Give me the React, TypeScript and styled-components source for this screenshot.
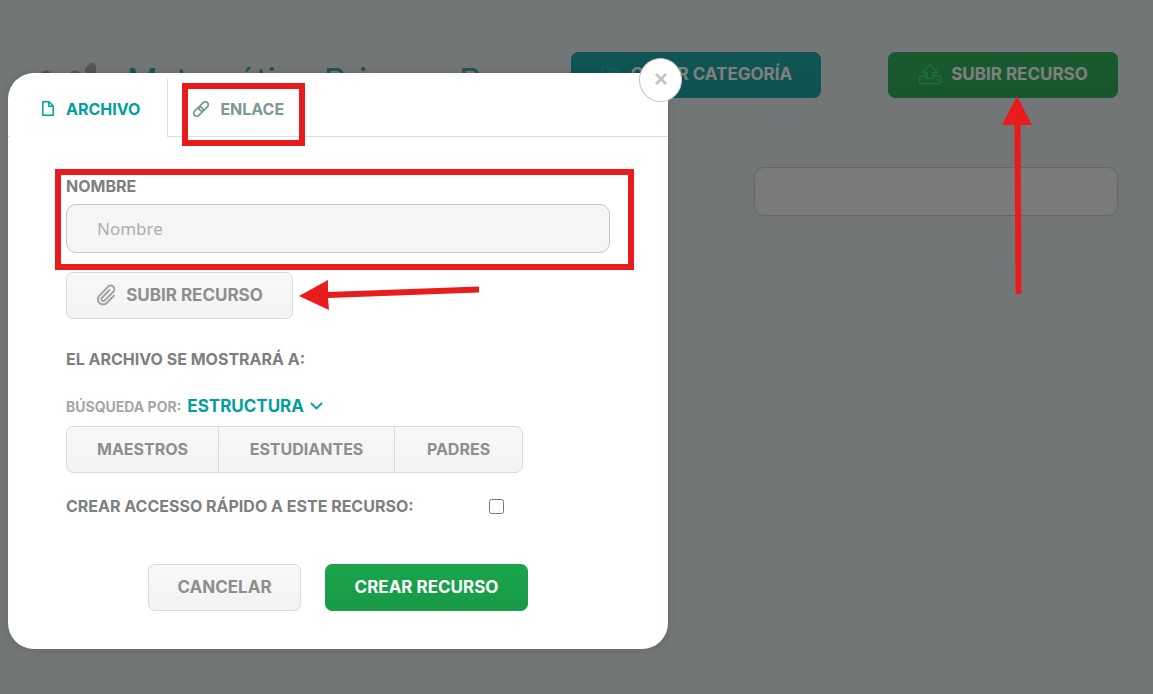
import React from "react";
import styled, { createGlobalStyle, css } from "styled-components";

const GlobalStyle = createGlobalStyle`
  *, *::before, *::after { box-sizing: border-box; }
  body {
    margin: 0;
    background: #e6eced;
    font-family: Inter, "Liberation Sans", sans-serif;
    color: #7c8080;
  }
  button, input, select { font: inherit; color: inherit; margin: 0; }
`;

const red = "#e81c1c";

const Page = styled.div`
  position: relative;
  min-height: 100vh;
  padding: 52px 35px 0 40px;
`;

const Header = styled.header`
  display: flex;
  align-items: flex-start;
`;

const Title = styled.h1`
  flex: 1;
  min-width: 0;
  margin: 0 0 0 29px;
  overflow: hidden;
  white-space: nowrap;
  font-size: 34px;
  line-height: 58px;
  font-weight: 400;
  color: #40a8a0;
`;

const Actions = styled.div`
  display: flex;
  gap: 67px;
`;

const Anchor = styled.div`
  position: relative;
  width: fit-content;
`;

type Tone = "teal" | "green" | "success" | "plain";

const tones = {
  teal: css`
    height: 46px;
    background: linear-gradient(#20aca9, #1ea4a1);
    border-color: #1ea8a5;
    color: #fff;
    svg { color: #22c4be; }
  `,
  green: css`
    height: 46px;
    background: linear-gradient(#34b45f, #31ac5a);
    border-color: #33b05d;
    color: #fff;
    svg { color: #3ddc7a; }
  `,
  success: css`
    background: linear-gradient(#1aa54c, #189a46);
    border-color: #18a14a;
    color: #fff;
  `,
  plain: css`
    background: linear-gradient(#f8f8f8, #f3f3f3);
    border-color: #d9dbdb;
    color: #8b8f8e;
    svg { color: #a0a4a4; }
  `,
};

const Button = styled.button<{ $tone: Tone; $width: number }>`
  display: flex;
  align-items: center;
  justify-content: center;
  gap: 9px;
  min-width: ${(p) => p.$width}px;
  height: 47px;
  padding: 0 16px 2px;
  border: 1px solid;
  border-radius: 7px;
  font-size: 17px;
  font-weight: 700;
  white-space: nowrap;
  cursor: pointer;
  ${(p) => tones[p.$tone]}
`;

const Search = styled.input`
  display: block;
  width: 364px;
  height: 49px;
  margin: 57px 0 0 auto;
  padding: 0 30px;
  border: 1px solid #c8cccc;
  border-radius: 10px;
  background: #f6f6f6;
`;

const Overlay = styled.div`
  position: absolute;
  inset: 0;
  z-index: 1;
  padding: 73px 8px 45px;
  background: rgba(0, 0, 0, 0.5);
`;

const Dialog = styled.section`
  position: relative;
  max-width: 660px;
  padding-bottom: 38px;
  border-radius: 26px;
  background: #fff;
  box-shadow: 0 0 8px rgba(0, 0, 0, 0.12);
`;

const Close = styled.button`
  position: absolute;
  top: -15px;
  right: -14px;
  display: grid;
  place-items: center;
  width: 43px;
  height: 44px;
  padding: 0 0 2px;
  border: 1px solid #c4c6c6;
  border-radius: 50%;
  background: #fff;
  color: #c2c4c4;
`;

const Tabs = styled.div`
  display: flex;
  padding-top: 6px;
  &::before {
    content: "";
    width: 2px;
    border-bottom: 1px solid #dcdfdf;
  }
`;

const TabSlot = styled.div<{ $last?: boolean }>`
  flex: ${(p) => (p.$last ? "1" : "none")};
  border: 0 solid #dcdfdf;
  border-width: ${(p) => (p.$last ? "0 0 1px" : "0 1px 0 0")};
`;

const Tab = styled.button<{ $active?: boolean }>`
  display: flex;
  align-items: center;
  gap: 11px;
  height: 57px;
  padding: 2px 27px 0;
  padding-left: ${(p) => (p.$active ? 31 : 25)}px;
  border: 0;
  background: none;
  font-size: 16px;
  font-weight: 700;
  color: ${(p) => (p.$active ? "#009f9b" : "#7c9995")};
`;

const Form = styled.form`
  display: flex;
  flex-direction: column;
  padding: 39px 58px 0;
`;

const Label = styled.label`
  display: block;
  font-size: 16px;
  line-height: 20px;
  font-weight: 700;
`;

const Field = styled.div`
  position: relative;
  margin-bottom: 19px;
`;

const NameInput = styled.input`
  display: block;
  width: 100%;
  height: 49px;
  margin-top: 8px;
  padding: 0 30px;
  border: 1px solid #c1c8c7;
  border-radius: 10px;
  background: #f5f5f5;
  font-family: "Noto Sans", sans-serif;
  font-size: 17px;
  &::placeholder { color: #adadad; opacity: 1; }
`;

const Audience = styled.p`
  margin: 30px 0 27px;
  font-size: 16px;
  line-height: 20px;
  font-weight: 700;
`;

const SearchBy = styled.div`
  display: flex;
  align-items: center;
  gap: 6px;
  height: 20px;
  margin-bottom: 10px;
  color: #009f9b;
`;

const SmallLabel = styled.label`
  font-size: 14px;
  font-weight: 700;
  color: #a3a7a6;
`;

const Select = styled.select`
  appearance: none;
  padding: 0;
  border: 0;
  background: none;
  font-size: 17px;
  line-height: 20px;
  font-weight: 700;
  color: #009f9b;
`;

const Group = styled.div`
  display: flex;
  button { border-radius: 0; font-size: 16px; }
  button:first-child { border-radius: 7px 0 0 7px; }
  button:last-child { border-radius: 0 7px 7px 0; }
  button + button { margin-left: -1px; }
`;

const QuickAccess = styled.div`
  display: flex;
  align-items: center;
  justify-content: space-between;
  width: 438px;
  height: 20px;
  margin: 23px 0 48px;
`;

const Checkbox = styled.input`
  width: 15px;
  height: 15px;
`;

const Footer = styled.div`
  display: flex;
  justify-content: center;
  gap: 24px;
`;

const Highlight = styled.div<{ $top: number; $left: number; $right: number; $bottom: number }>`
  position: absolute;
  top: ${(p) => p.$top}px;
  left: ${(p) => p.$left}px;
  right: ${(p) => p.$right}px;
  bottom: ${(p) => p.$bottom}px;
  border: 6px solid ${red};
  pointer-events: none;
`;

const UpArrow = styled.svg`
  position: absolute;
  z-index: 2;
  top: 44px;
  right: 86px;
`;

const LeftArrow = styled.svg`
  position: absolute;
  top: 7px;
  left: 232px;
`;

const Logo = () => (
  <svg width="58" height="46" viewBox="0 0 58 46" fill="none" stroke="#a8a8a8" strokeLinecap="round" strokeLinejoin="round" aria-hidden="true">
    <path d="M6 41V24L20 36L35 24V41" strokeWidth="11" />
    <path d="M52 41V15L49 18" strokeWidth="8" />
  </svg>
);

const FolderIcon = () => (
  <svg width="22" height="18" viewBox="0 0 22 18" fill="none" stroke="currentColor" strokeWidth="1.700" strokeLinejoin="round" aria-hidden="true">
    <path d="M2 14V3.500Q2 2 3.500 2H7.500L9.500 4.500H17Q18.500 4.500 18.500 6V7.500M2 14Q2 16 4 16H17L20.500 7.500H6L3.500 14" />
  </svg>
);

const UploadIcon = () => (
  <svg width="24" height="22" viewBox="0 0 24 22" fill="none" stroke="currentColor" strokeWidth="1.600" strokeLinejoin="round" aria-hidden="true">
    <path d="M12 1.500L4.500 9.500H9V15.500H15V9.500H19.500Z" />
    <path d="M9 13H2.500Q1.500 13 1.500 14V19.500Q1.500 20.500 2.500 20.500H21.500Q22.500 20.500 22.500 19.500V14Q22.500 13 21.500 13H15" />
    <path d="M17.500 17H19.500" />
  </svg>
);

const FileIcon = () => (
  <svg width="14" height="17" viewBox="0 0 14 17" fill="none" stroke="currentColor" strokeWidth="1.500" strokeLinejoin="round" aria-hidden="true">
    <path d="M1.800 1.800H8L12.200 6V15.200H1.800Z" />
    <path d="M7.800 2V6.200H12" />
  </svg>
);

const LinkIcon = () => (
  <svg width="16" height="16" viewBox="0 0 16 16" fill="none" stroke="currentColor" strokeWidth="1.800" aria-hidden="true">
    <g transform="rotate(-45 8 8)">
      <rect x="-1" y="5" width="10.500" height="6" rx="3" />
      <rect x="6.500" y="5" width="10.500" height="6" rx="3" />
    </g>
  </svg>
);

const ClipIcon = () => (
  <svg width="21" height="22" viewBox="0 0 21 22" fill="none" strokeLinecap="round" strokeLinejoin="round" aria-hidden="true">
    <path
      d="M13.500 6L6 13.700A1.900 1.900 0 0 0 8.800 16.400L17.300 7.700A3.600 3.600 0 0 0 12.100 2.600L3.400 11.600A5.200 5.200 0 0 0 10.800 19L18 11.600"
      stroke="currentColor"
      strokeWidth="2"
    />
  </svg>
);

export default function App() {
  return (
    <>
      <GlobalStyle />
      <Page>
        <Header>
          <Logo />
          <Title>Matemática Primero B</Title>
          <Actions>
            <Button type="button" $tone="teal" $width={250}>
              <FolderIcon />
              CREAR CATEGORÍA
            </Button>
            <Anchor>
              <Button type="button" $tone="green" $width={230}>
                <UploadIcon />
                SUBIR RECURSO
              </Button>
              <UpArrow width="30" height="198" viewBox="0 0 30 198" fill={red} aria-hidden="true">
                <path d="M15 0L30 29H18.500L19.500 198H13.500L12.500 29H0Z" />
              </UpArrow>
            </Anchor>
          </Actions>
        </Header>
        <Search type="search" aria-label="Buscar" />

        <Overlay>
          <Dialog role="dialog" aria-modal="true" aria-label="Crear recurso">
            <Close type="button" aria-label="Cerrar">
              <svg width="12" height="12" viewBox="0 0 12 12" stroke="currentColor" strokeWidth="2.800" aria-hidden="true">
                <path d="M1 1L11 11M11 1L1 11" />
              </svg>
            </Close>
            <Tabs role="tablist">
              <TabSlot>
                <Tab type="button" role="tab" aria-selected="true" $active>
                  <FileIcon />
                  ARCHIVO
                </Tab>
              </TabSlot>
              <TabSlot $last>
                <Anchor>
                  <Tab type="button" role="tab" aria-selected="false">
                    <LinkIcon />
                    ENLACE
                  </Tab>
                  <Highlight $top={4} $left={14} $right={6} $bottom={-10} />
                </Anchor>
              </TabSlot>
            </Tabs>
            <Form>
              <Field>
                <Label htmlFor="nombre">NOMBRE</Label>
                <NameInput id="nombre" type="text" placeholder="Nombre" />
                <Highlight $top={-7} $left={-11} $right={-24} $bottom={-17} />
              </Field>
              <Anchor>
                <Button type="button" $tone="plain" $width={227}>
                  <ClipIcon />
                  SUBIR RECURSO
                </Button>
                <LeftArrow width="182" height="32" viewBox="0 0 182 32" fill={red} aria-hidden="true">
                  <path d="M1 17L30 1V13L181 7.500V13.500L30 19L31 31Z" />
                </LeftArrow>
              </Anchor>
              <Audience>EL ARCHIVO SE MOSTRARÁ A:</Audience>
              <SearchBy>
                <SmallLabel htmlFor="busqueda">BÚSQUEDA POR:</SmallLabel>
                <Select id="busqueda">
                  <option>ESTRUCTURA</option>
                </Select>
                <svg width="13" height="8" viewBox="0 0 13 8" fill="none" stroke="currentColor" strokeWidth="1.800" aria-hidden="true">
                  <path d="M1 1L6.500 6.500L12 1" />
                </svg>
              </SearchBy>
              <Group>
                <Button type="button" $tone="plain" $width={153}>MAESTROS</Button>
                <Button type="button" $tone="plain" $width={177}>ESTUDIANTES</Button>
                <Button type="button" $tone="plain" $width={129}>PADRES</Button>
              </Group>
              <QuickAccess>
                <Label htmlFor="rapido">CREAR ACCESSO RÁPIDO A ESTE RECURSO:</Label>
                <Checkbox id="rapido" type="checkbox" />
              </QuickAccess>
              <Footer>
                <Button type="button" $tone="plain" $width={153}>CANCELAR</Button>
                <Button type="submit" $tone="success" $width={203}>CREAR RECURSO</Button>
              </Footer>
            </Form>
          </Dialog>
        </Overlay>
      </Page>
    </>
  );
}
